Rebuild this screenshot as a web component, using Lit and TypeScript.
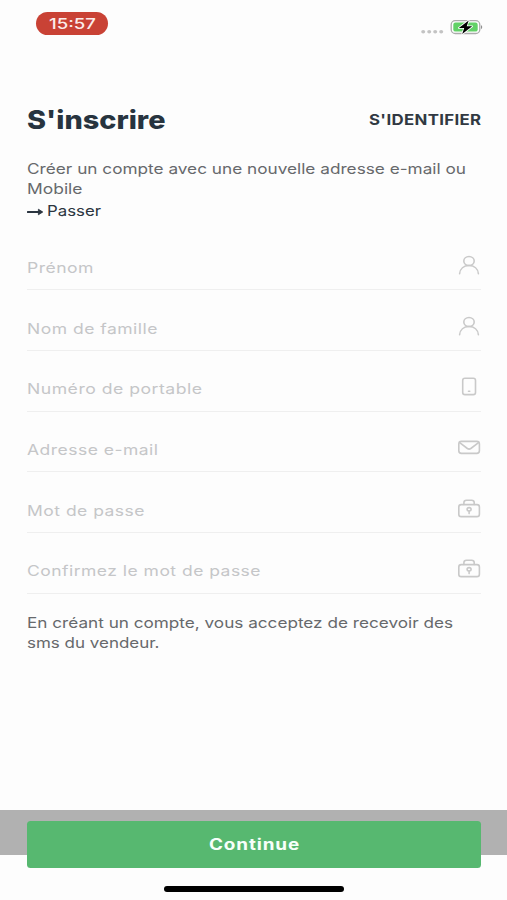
import { LitElement, html, css, svg } from "lit";
import { customElement, property } from "lit/decorators.js";

/** One line of text, stretched horizontally to a given width. */
@customElement("wide-text")
class WideText extends LitElement {
  @property({ type: Number }) width = 100;
  static styles = css`
    :host { display: block; white-space: nowrap; height: 20px; line-height: 20px; text-align: left; }
    .inner { display: inline-block; transform-origin: 0 50%; }
  `;
  render() {
    return html`<span class="inner"><slot></slot></span>`;
  }
  firstUpdated() {
    this.style.width = `${this.width}px`;
    const el = this.renderRoot.querySelector(".inner") as HTMLElement;
    const natural = el.getBoundingClientRect().width;
    if (natural > 0) el.style.transform = `scaleX(${this.width / natural})`;
  }
}

const icons: Record<string, unknown> = {
  user: svg`<ellipse cx="12" cy="7" rx="5.2" ry="4.5"/><path d="M2.6 19.8C3 14.7 6.8 11.5 12 11.5s9 3.2 9.4 8.3"/>`,
  phone: svg`<rect x="5.7" y="3.2" width="12.8" height="16.4" rx="2.2"/><path d="M11.5 16.3h1.2"/>`,
  mail: svg`<rect x="1.8" y="5.4" width="20.6" height="12" rx="2.6"/><path d="M3 6.8l7.4 5.7q1.7 1.2 3.4 0L21.2 6.8"/>`,
  lock: svg`<rect x="1.8" y="7.6" width="20.6" height="12" rx="2.4"/><path d="M6.9 7.4V5.6q0-2.4 2.6-2.4h5.1q2.6 0 2.6 2.4v1.8"/><ellipse cx="12.1" cy="12.3" rx="2" ry="1.7"/><path d="M12.1 14v2.6"/>`,
};

const fields = [
  { label: "Prénom", width: 67, icon: "user" },
  { label: "Nom de famille", width: 131, icon: "user" },
  { label: "Numéro de portable", width: 175.5, icon: "phone" },
  { label: "Adresse e-mail", width: 131.5, icon: "mail" },
  { label: "Mot de passe", width: 118, icon: "lock" },
  { label: "Confirmez le mot de passe", width: 234, icon: "lock" },
];

@customElement("app-root")
class AppRoot extends LitElement {
  static styles = css`
    :host {
      display: flex; flex-direction: column; box-sizing: border-box;
      width: 507px; height: 900px; overflow: hidden;
      background: #fdfdfd; color: #67696c;
      font-family: Inter, "Liberation Sans", sans-serif; font-size: 14.5px;
    }
    .status { display: flex; justify-content: space-between; padding: 12px 23px 0 36px; height: 23px; }
    .pill {
      display: flex; align-items: center; justify-content: center;
      width: 72px; height: 23px; border-radius: 12px;
      background: #c94235; color: #fbeceb; font-weight: 500; font-size: 14.7px;
    }
    .signal { width: 64px; height: 20px; margin-top: 5px; }
    .head { display: flex; justify-content: space-between; padding: 75px 26px 0 27px; }
    .title { font-size: 25.5px; font-weight: 800; color: #27343f; }
    .signin { font-weight: 650; color: #313942; letter-spacing: 0.3px; }
    .intro { padding: 28.5px 27px 0; line-height: 20px; }
    .intro .second { margin-top: 0.5px; }
    .skip { display: flex; align-items: center; gap: 3px; margin-top: 2px; color: #2b3540; }
    .arrow { width: 17px; height: 10px; margin-top: 2px; }
    .form { padding: 10.4px 26px 0 27px; }
    .field {
      display: flex; justify-content: space-between; align-items: flex-start;
      box-sizing: border-box; height: 60.7px; padding-top: 28.2px;
      border-bottom: 1.3px solid #efefef; color: #c5c6c8;
    }
    .field:first-child { height: 59px; padding-top: 26.3px; }
    .field wide-text { letter-spacing: 0.4px; }
    .icon { width: 24px; height: 24px; margin-top: -4px; fill: none; stroke: #c9c9c9; stroke-width: 1.6; stroke-linecap: round; }
    .notice { padding: 19px 27px 0; }
    .footer { margin-top: auto; height: 90px; background: linear-gradient(#b1b1b1 45px, #fdfdfd 45px); padding: 11px 26px 0 27px; box-sizing: border-box; }
    .button {
      display: flex; align-items: center; justify-content: center; width: 100%;
      height: 47px; padding: 0; border: 0; border-radius: 3.5px; background: #57b870;
      color: #f7fffa; font: 700 15.5px Inter, sans-serif; letter-spacing: 0.7px;
    }
    .home { width: 180px; height: 5.6px; margin: 18px auto 0; border-radius: 3px; background: #000; }
  `;

  render() {
    return html`
      <div class="status">
        <div class="pill"><wide-text width="47">15:57</wide-text></div>
        <svg class="signal" viewBox="0 0 64 20">
          <g fill="#c3c3c3">
            ${[3.2, 9.2, 15.2, 21.2].map((x) => svg`<ellipse cx=${x} cy="14.7" rx="2" ry="1.7"/>`)}
          </g>
          <rect x="31.2" y="3.7" width="28.6" height="12.8" rx="4" fill="#fff" stroke="#ababab" stroke-width="1.3"/>
          <rect x="33.3" y="5.6" width="24.4" height="9" rx="2.2" fill="#62d167"/>
          <path d="M61.2 8q2 2.1 0 4.2z" fill="#777"/>
          <path d="M48.7 3.4L38.8 11h5.4l-2 6L52.2 9.3h-5.5z" fill="#000" stroke="#fff" stroke-width="1.6" paint-order="stroke" stroke-linejoin="round"/>
        </svg>
      </div>

      <div class="head">
        <wide-text class="title" width="138.5">S'inscrire</wide-text>
        <wide-text class="signin" width="112.5">S'IDENTIFIER</wide-text>
      </div>

      <div class="intro">
        <wide-text width="439">Créer un compte avec une nouvelle adresse e-mail ou</wide-text>
        <wide-text class="second" width="55.5">Mobile</wide-text>
        <div class="skip">
          <svg class="arrow" viewBox="0 0 17 10"><path d="M.9 5H14" stroke="#2b3540" stroke-width="2.1" stroke-linecap="round"/><path d="M11.4 2.2L15.8 5l-4.4 2.8z" fill="#2b3540" stroke="#2b3540" stroke-width=".8" stroke-linejoin="round"/></svg>
          <wide-text width="54">Passer</wide-text>
        </div>
      </div>

      <div class="form">
        ${fields.map(
          (f) => html`<div class="field">
            <wide-text width=${f.width}>${f.label}</wide-text>
            <svg class="icon" viewBox="0 0 24 24">${icons[f.icon]}</svg>
          </div>`
        )}
      </div>

      <div class="notice">
        <wide-text width="426">En créant un compte, vous acceptez de recevoir des</wide-text>
        <wide-text width="132.5">sms du vendeur.</wide-text>
      </div>

      <div class="footer">
        <button class="button"><wide-text width="91">Continue</wide-text></button>
        <div class="home"></div>
      </div>
    `;
  }
}
